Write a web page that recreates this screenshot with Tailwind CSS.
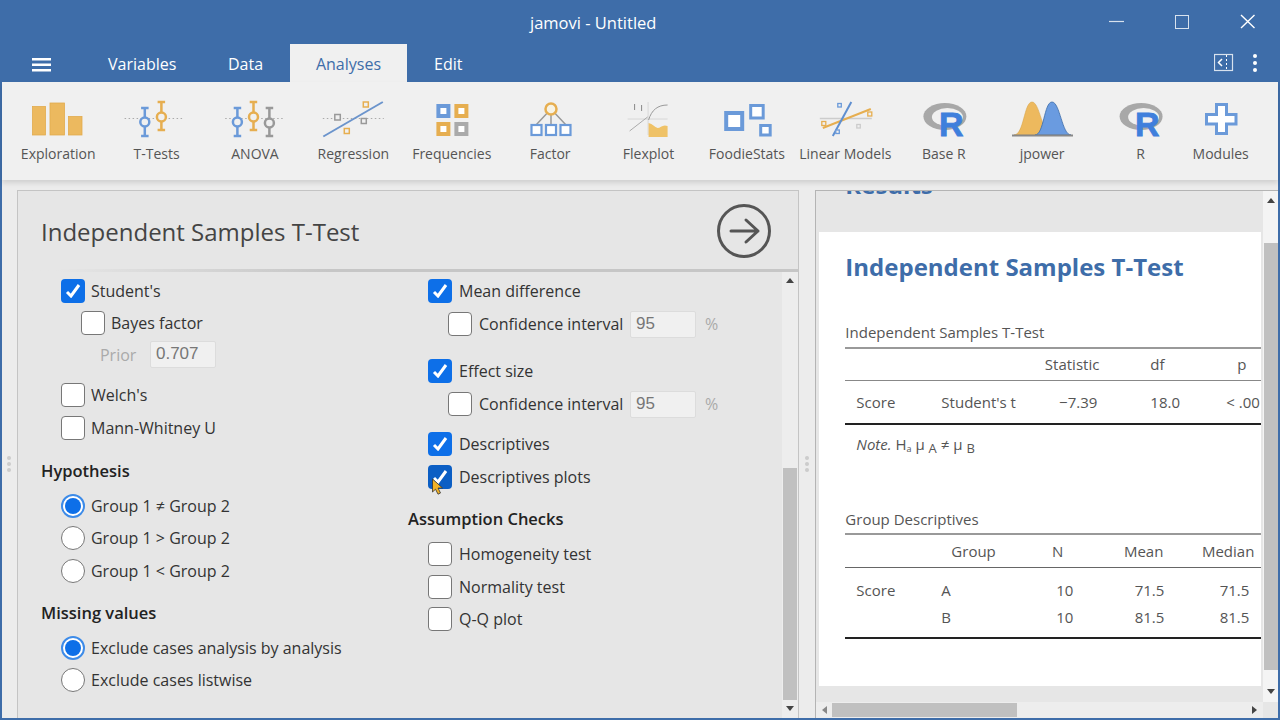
<!DOCTYPE html>
<html lang="en">
<head>
  <meta charset="UTF-8" />
  <title>jamovi - Untitled</title>
  <script src="https://cdn.jsdelivr.net/npm/@tailwindcss/browser@4"></script>
</head>
<body class="w-[1280px] h-[720px] overflow-hidden bg-[#3e6da9] font-['Open_Sans',sans-serif] text-[16px] text-[#333]">

  <!-- Title bar -->
  <header class="h-[44px] flex items-center text-white">
    <div class="ml-[530px] text-[16.500px] pt-[3px]">jamovi - Untitled</div>
    <svg class="ml-auto" width="180" height="44" viewBox="1100 0 180 44" fill="none" stroke="#fff">
      <path d="M1109 21.5h15" stroke-width="1.2" opacity="0.8"/>
      <rect x="1175.5" y="15.5" width="13" height="13" stroke-width="1" opacity="0.8"/>
      <path d="M1241 15l13.500 13M1254.500 15l-13.500 13" stroke-width="1.400"/>
    </svg>
  </header>

  <!-- Tabs -->
  <nav class="h-[38px] flex items-center text-white relative">
    <svg class="ml-[32px] mt-[4px]" width="20" height="14" viewBox="0 0 20 14" fill="#fff">
      <rect width="19" height="2.500" y="0"/><rect width="19" height="2.500" y="5.500"/><rect width="19" height="2.500" y="11"/>
    </svg>
    <div class="ml-[56px] w-[120px] pt-[2px]">Variables</div>
    <div class="w-[62px] pt-[2px]">Data</div>
    <div class="h-full w-[117px] pt-[2px] bg-[#f0f0f0] text-[#3e6da9] flex items-center justify-center">Analyses</div>
    <div class="ml-[27px] pt-[2px]">Edit</div>
    <svg class="ml-auto mr-[16px]" width="50" height="20" viewBox="1215 54 50 20" fill="none" stroke="#fff">
      <rect x="1215.500" y="55.500" width="18" height="16" stroke-width="1.200" opacity="0.8"/>
      <path d="M1223 60l-3.500 3.500 3.500 3.500" stroke-width="1.500"/>
      <path d="M1227.500 56v16" stroke-width="1" stroke-dasharray="2 2"/>
      <circle cx="1256" cy="57" r="2" fill="#fff" stroke="none"/>
      <circle cx="1256" cy="64" r="2" fill="#fff" stroke="none"/>
      <circle cx="1256" cy="71" r="2" fill="#fff" stroke="none"/>
    </svg>
  </nav>

  <!-- Analyses ribbon -->
  <section class="relative z-10 h-[98px] ml-[2px] mr-[2px] bg-[#f0f0f0] shadow-[0_3px_5px_rgba(0,0,0,0.12)] flex pl-[7px] text-[14px] text-[#555]">
    <div class="w-[98.400px] flex flex-col items-center">
      <svg width="98.400" height="58" viewBox="9 82 98.400 58" fill="#ecb95f" stroke="#e2ab4e" stroke-width="0.800">
        <rect x="32.500" y="106.500" width="13" height="28.500"/><rect x="50" y="103" width="14.500" height="32"/><rect x="68.500" y="116.500" width="13.500" height="18.500"/>
      </svg>
      <span class="leading-[20px] mt-[4px]">Exploration</span>
    </div>
    <div class="w-[98.400px] flex flex-col items-center">
      <svg width="98.400" height="58" viewBox="107.400 82 98.400 58" fill="none" stroke-width="2.500">
        <path d="M125 118.500h60" stroke="#aaa" stroke-width="1.200" stroke-dasharray="1.500 2.500"/>
        <path d="M141.500 108h7.500M145.200 108v28M141.500 136h7.500" stroke="#6b9ad9"/><circle cx="145.200" cy="122" r="4.500" fill="#f0f0f0" stroke="#6b9ad9"/>
        <path d="M158 102h7.500M161.800 102v28M158 130h7.500" stroke="#e6ae50"/><circle cx="161.800" cy="117" r="4.500" fill="#f0f0f0" stroke="#e6ae50"/>
      </svg>
      <span class="leading-[20px] mt-[4px]">T-Tests</span>
    </div>
    <div class="w-[98.400px] flex flex-col items-center">
      <svg width="98.400" height="58" viewBox="205.800 82 98.400 58" fill="none" stroke-width="2.500">
        <path d="M225 118.500h60" stroke="#aaa" stroke-width="1.200" stroke-dasharray="1.500 2.500"/>
        <path d="M233.500 108h7.500M237.200 108v28M233.500 136h7.500" stroke="#6b9ad9"/><circle cx="237.200" cy="122" r="4.500" fill="#f0f0f0" stroke="#6b9ad9"/>
        <path d="M249.500 102h7.500M253.300 102v28M249.500 130h7.500" stroke="#e6ae50"/><circle cx="253.300" cy="117" r="4.500" fill="#f0f0f0" stroke="#e6ae50"/>
        <path d="M265.500 108h7.500M269.200 108v28M265.500 136h7.500" stroke="#999"/><circle cx="269.200" cy="123" r="4.500" fill="#f0f0f0" stroke="#999"/>
      </svg>
      <span class="leading-[20px] mt-[4px]">ANOVA</span>
    </div>
    <div class="w-[98.400px] flex flex-col items-center">
      <svg width="98.400" height="58" viewBox="304.200 82 98.400 58" fill="#f0f0f0" stroke-width="1.500">
        <path d="M323 118.500h61" stroke="#aaa" stroke-width="1.200" stroke-dasharray="1.500 2.500"/>
        <path d="M323.500 136.500L383 102" stroke="#6b94cc" stroke-width="2"/>
        <rect x="335" y="114.500" width="5.500" height="5.500" stroke="#999"/><rect x="363.500" y="102" width="5" height="5" stroke="#e6ae50"/>
        <rect x="361.500" y="118.500" width="5" height="5" stroke="#999"/><rect x="344.500" y="128.500" width="5" height="5" stroke="#e6ae50"/>
      </svg>
      <span class="leading-[20px] mt-[4px]">Regression</span>
    </div>
    <div class="w-[98.400px] flex flex-col items-center">
      <svg width="98.400" height="58" viewBox="402.600 82 98.400 58" fill="#fff" stroke-width="4">
        <rect x="438" y="106" width="10" height="10" stroke="#6b9ad9"/><rect x="456" y="106" width="10" height="10" stroke="#e6ae50"/>
        <rect x="438" y="124" width="10" height="10" stroke="#e6ae50"/><rect x="456" y="124" width="10" height="10" stroke="#aaa"/>
      </svg>
      <span class="leading-[20px] mt-[4px]">Frequencies</span>
    </div>
    <div class="w-[98.400px] flex flex-col items-center">
      <svg width="98.400" height="58" viewBox="501 82 98.400 58" fill="#fff" stroke-width="2.200">
        <path d="M551 109L536 125M551 109v16M551 109l15 16" stroke="#999" stroke-width="1.500"/>
        <circle cx="551" cy="109" r="5.500" fill="#f7f3e4" stroke="#e6ae50" stroke-width="2.500"/>
        <rect x="531.500" y="125" width="10" height="10" stroke="#6b9ad9"/><rect x="546" y="125" width="10" height="10" stroke="#6b9ad9"/><rect x="560.500" y="125" width="10" height="10" stroke="#6b9ad9"/>
      </svg>
      <span class="leading-[20px] mt-[4px]">Factor</span>
    </div>
    <div class="w-[98.400px] flex flex-col items-center">
      <svg width="98.400" height="58" viewBox="599.400 82 98.400 58" fill="none">
        <path d="M628 119h40M648.500 102v33" stroke="#d8d8d8" stroke-width="1"/>
        <path d="M635 104v6M642 105v6" stroke="#888" stroke-width="1"/>
        <path d="M630 131L648 117" stroke="#aaa" stroke-width="1"/>
        <path d="M649 120C652 110 658 105 668 105" stroke="#999" stroke-width="1"/>
        <path d="M649 123C653 124 655 127 658 128C661 128 663 124 668 126V137H649Z" fill="#efc267"/>
      </svg>
      <span class="leading-[20px] mt-[4px]">Flexplot</span>
    </div>
    <div class="w-[98.400px] flex flex-col items-center">
      <svg width="98.400" height="58" viewBox="697.800 82 98.400 58" fill="#fff" stroke="#6b9ad9">
        <rect x="726" y="113" width="16" height="16" stroke-width="4"/><rect x="750.500" y="105.500" width="12.500" height="12.500" stroke-width="3"/><rect x="760.500" y="125.500" width="9.500" height="9.500" stroke-width="3"/>
      </svg>
      <span class="leading-[20px] mt-[4px]">FoodieStats</span>
    </div>
    <div class="w-[98.400px] flex flex-col items-center">
      <svg width="98.400" height="58" viewBox="796.200 82 98.400 58" fill="#f0f0f0" stroke-width="1.300">
        <path d="M820 118.500h52" stroke="#ccc"/>
        <path d="M823 128L871 109" stroke="#e6ae50" stroke-width="2"/>
        <path d="M833 136L851.500 102" stroke="#5f8fd0" stroke-width="2"/>
        <rect x="838" y="103.500" width="3.500" height="3.500" stroke="#6b9ad9"/><rect x="822" y="121.500" width="4" height="4" stroke="#e6ae50"/>
        <rect x="868" y="112" width="4" height="4" stroke="#e6ae50"/><rect x="836" y="130" width="3.500" height="3.500" stroke="#6b9ad9"/><rect x="857" y="124.500" width="3.500" height="3.500" stroke="#ccc"/>
      </svg>
      <span class="leading-[20px] mt-[4px]">Linear Models</span>
    </div>
    <div class="w-[98.400px] flex flex-col items-center">
      <svg width="98.400" height="58" viewBox="894.600 82 98.400 58">
        <ellipse cx="944.500" cy="116.500" rx="21.500" ry="13.500" fill="#a8a8a8"/>
        <ellipse cx="947" cy="117" rx="15.500" ry="9" fill="#f0f0f0"/>
        <text x="938.500" y="136" font-family="Liberation Sans" font-weight="700" font-size="34" fill="#3f7fdc" stroke="#3f7fdc" stroke-width="0.800">R</text>
      </svg>
      <span class="leading-[20px] mt-[4px]">Base R</span>
    </div>
    <div class="w-[98.400px] flex flex-col items-center">
      <svg width="98.400" height="58" viewBox="993 82 98.400 58">
        <path d="M1014 135C1024 135 1024 102 1032 102C1040 102 1042 135 1052 135Z" fill="#edb95e" stroke="#d9a64e" stroke-width="0.600"/>
        <path d="M1035 135C1044 135 1044 102 1052 102C1060 102 1062 135 1071 135Z" fill="#6a9be0" stroke="#3e6da9" stroke-width="0.800"/>
        <path d="M1012 135.500h61" stroke="#888" stroke-width="2"/>
      </svg>
      <span class="leading-[20px] mt-[4px]">jpower</span>
    </div>
    <div class="w-[98.400px] flex flex-col items-center">
      <svg width="98.400" height="58" viewBox="1091.400 82 98.400 58">
        <ellipse cx="1141.500" cy="116.500" rx="21.500" ry="13.500" fill="#a8a8a8"/>
        <ellipse cx="1144" cy="117" rx="15.500" ry="9" fill="#f0f0f0"/>
        <text x="1135.500" y="136" font-family="Liberation Sans" font-weight="700" font-size="34" fill="#3f7fdc" stroke="#3f7fdc" stroke-width="0.800">R</text>
      </svg>
      <span class="leading-[20px] mt-[4px]">R</span>
    </div>
    <div class="w-[62px] flex flex-col items-center">
      <svg width="62" height="58" viewBox="1190 82 62 58">
        <path d="M1216.500 104.500h10v10h9.500v9.500h-9.500v9.500h-10v-9.500h-10v-9.500h10z" fill="#fff" stroke="#6b9ad9" stroke-width="3"/>
      </svg>
      <span class="leading-[20px] mt-[4px]">Modules</span>
    </div>
  </section>

  <!-- Main area -->
  <main class="h-[538px] mx-[2px] bg-[#ececec] flex pt-[10px] text-[16px]">

    <!-- Options panel -->
    <div class="relative w-[15px]">
      <div class="absolute left-[5px] top-[266px] flex flex-col gap-[2px]">
        <span class="size-[4px] rounded-full bg-[#ccc]"></span><span class="size-[4px] rounded-full bg-[#ccc]"></span><span class="size-[4px] rounded-full bg-[#ccc]"></span>
      </div>
    </div>
    <section class="w-[783px] border border-b-0 border-[#c4c4c4] bg-[#e6e6e6] flex flex-col">
      <div class="h-[78px] shrink-0 flex items-center justify-between">
        <h2 class="ml-[23px] mt-[3px] text-[24px] font-normal text-[#444]">Independent Samples T-Test</h2>
        <svg class="mr-[26px] mt-[2px]" width="56" height="56" viewBox="0 0 56 56" fill="none" stroke="#555" stroke-width="3">
          <circle cx="28" cy="28" r="25.500"/>
          <path d="M15 28h27M30 17l12 11-12 11" stroke-linecap="round" stroke-linejoin="round"/>
        </svg>
      </div>
      <div class="h-[3px] shrink-0 bg-linear-to-r from-[#e6e6e6] from-[5%] to-[#c6c6c6] to-[40%]"></div>
      <div class="flex-1 flex min-h-0 relative">
        <div class="w-[390px] pl-[23px] pt-[3px]">
          <div class="h-8 flex items-center pl-[20px]">
            <span class="w-[24px] h-[24px] rounded-[4px] bg-[#0d6fe8] flex items-center justify-center mr-[6px]"><svg width="16" height="14" viewBox="0 0 16 14" fill="none" stroke="#fff" stroke-width="3"><path d="M2 8l4 4 8-11"/></svg></span>Student's
          </div>
          <div class="h-8 flex items-center pl-[40px]">
            <span class="w-[24px] h-[24px] rounded-[4px] bg-white border border-[#777] mr-[6px]"></span>Bayes factor
          </div>
          <div class="h-[31px] flex items-center pl-[59px] text-[#aaa]">
            <span class="w-[50px]">Prior</span>
            <span class="w-[66px] h-[27px] bg-[#f0f0f0] border border-[#dcdcdc] rounded-[2px] pl-[5px] leading-[24px] text-[17px] text-[#777] font-['Liberation_Sans']">0.707</span>
          </div>
          <div class="mt-[9px] h-8 flex items-center pl-[20px]">
            <span class="w-[24px] h-[24px] rounded-[4px] bg-white border border-[#777] mr-[6px]"></span>Welch's
          </div>
          <div class="mt-px h-8 flex items-center pl-[20px]">
            <span class="w-[24px] h-[24px] rounded-[4px] bg-white border border-[#777] mr-[6px]"></span>Mann-Whitney U
          </div>
          <div class="mt-[11px] h-8 flex items-center font-semibold text-[16.500px] text-[#222]">Hypothesis</div>
          <div class="mt-[3px] h-8 flex items-center pl-[20px]">
            <span class="w-[24px] h-[24px] rounded-full bg-white border-2 border-[#3d8be8] flex items-center justify-center mr-[6px]"><span class="w-[16px] h-[16px] rounded-full bg-[#0d6fe8]"></span></span>Group 1 ≠ Group 2
          </div>
          <div class="h-8 flex items-center pl-[20px]">
            <span class="w-[24px] h-[24px] rounded-full bg-white border border-[#777] mr-[6px]"></span>Group 1 &gt; Group 2
          </div>
          <div class="mt-px h-8 flex items-center pl-[20px]">
            <span class="w-[24px] h-[24px] rounded-full bg-white border border-[#777] mr-[6px]"></span>Group 1 &lt; Group 2
          </div>
          <div class="mt-[10px] h-8 flex items-center font-semibold text-[16.500px] text-[#222]">Missing values</div>
          <div class="mt-[3px] h-8 flex items-center pl-[20px]">
            <span class="w-[24px] h-[24px] rounded-full bg-white border-2 border-[#3d8be8] flex items-center justify-center mr-[6px]"><span class="w-[16px] h-[16px] rounded-full bg-[#0d6fe8]"></span></span>Exclude cases analysis by analysis
          </div>
          <div class="h-8 flex items-center pl-[20px]">
            <span class="w-[24px] h-[24px] rounded-full bg-white border border-[#777] mr-[6px]"></span>Exclude cases listwise
          </div>
        </div>
        <div class="flex-1 pt-[3px]">
          <div class="h-8 flex items-center pl-[20px]">
            <span class="w-[24px] h-[24px] rounded-[4px] bg-[#0d6fe8] flex items-center justify-center mr-[7px]"><svg width="16" height="14" viewBox="0 0 16 14" fill="none" stroke="#fff" stroke-width="3"><path d="M2 8l4 4 8-11"/></svg></span>Mean difference
          </div>
          <div class="mt-px h-8 flex items-center pl-[40px]">
            <span class="w-[24px] h-[24px] rounded-[4px] bg-white border border-[#777] mr-[7px]"></span><span class="w-[151px]">Confidence interval</span>
            <span class="w-[66px] h-[27px] bg-[#f0f0f0] border border-[#dcdcdc] rounded-[2px] pl-[5px] leading-[24px] text-[17px] text-[#777] font-['Liberation_Sans']">95</span>
            <span class="ml-[9px] text-[#aaa]">%</span>
          </div>
          <div class="mt-[15px] h-8 flex items-center pl-[20px]">
            <span class="w-[24px] h-[24px] rounded-[4px] bg-[#0d6fe8] flex items-center justify-center mr-[7px]"><svg width="16" height="14" viewBox="0 0 16 14" fill="none" stroke="#fff" stroke-width="3"><path d="M2 8l4 4 8-11"/></svg></span>Effect size
          </div>
          <div class="mt-px h-8 flex items-center pl-[40px]">
            <span class="w-[24px] h-[24px] rounded-[4px] bg-white border border-[#777] mr-[7px]"></span><span class="w-[151px]">Confidence interval</span>
            <span class="w-[66px] h-[27px] bg-[#f0f0f0] border border-[#dcdcdc] rounded-[2px] pl-[5px] leading-[24px] text-[17px] text-[#777] font-['Liberation_Sans']">95</span>
            <span class="ml-[9px] text-[#aaa]">%</span>
          </div>
          <div class="mt-[8px] h-8 flex items-center pl-[20px]">
            <span class="w-[24px] h-[24px] rounded-[4px] bg-[#0d6fe8] flex items-center justify-center mr-[7px]"><svg width="16" height="14" viewBox="0 0 16 14" fill="none" stroke="#fff" stroke-width="3"><path d="M2 8l4 4 8-11"/></svg></span>Descriptives
          </div>
          <div class="mt-px h-8 flex items-center pl-[20px] relative">
            <span class="w-[24px] h-[24px] rounded-[4px] bg-[#0b5ec4] flex items-center justify-center mr-[7px]"><svg width="16" height="14" viewBox="0 0 16 14" fill="none" stroke="#fff" stroke-width="3"><path d="M2 8l4 4 8-11"/></svg></span>Descriptives plots
            <svg class="absolute left-[23px] top-[17px]" width="13" height="18" viewBox="0 0 13 18"><path d="M1.500 1v13l3-2.800 2.500 5 2.500-1.200-2.500-5h4.500z" fill="#f2b327" stroke="#333" stroke-width="0.800"/></svg>
          </div>
          <div class="mt-[10px] h-8 flex items-center font-semibold text-[16.500px] text-[#222]">Assumption Checks</div>
          <div class="mt-[3px] h-8 flex items-center pl-[20px]">
            <span class="w-[24px] h-[24px] rounded-[4px] bg-white border border-[#777] mr-[7px]"></span>Homogeneity test
          </div>
          <div class="mt-px h-8 flex items-center pl-[20px]">
            <span class="w-[24px] h-[24px] rounded-[4px] bg-white border border-[#777] mr-[7px]"></span>Normality test
          </div>
          <div class="h-8 flex items-center pl-[20px]">
            <span class="w-[24px] h-[24px] rounded-[4px] bg-white border border-[#777] mr-[7px]"></span>Q-Q plot
          </div>
        </div>
        <!-- scrollbar -->
        <div class="w-[16px] shrink-0 bg-[#ededed] flex flex-col items-center">
          <svg class="mt-[6px]" width="8" height="5" viewBox="0 0 8 5" fill="#444"><path d="M0 5L4 0l4 5z"/></svg>
          <div class="mt-auto w-[14px] h-[232px] bg-[#c0c0c0]"></div>
          <svg class="mt-[6px] mb-[7px]" width="8" height="5" viewBox="0 0 8 5" fill="#444"><path d="M0 0L4 5l4-5z"/></svg>
        </div>
      </div>
    </section>

    <!-- Splitter -->
    <div class="relative w-[16px]">
      <div class="absolute left-[6px] top-[266px] flex flex-col gap-[2px]">
        <span class="size-[4px] rounded-full bg-[#ccc]"></span><span class="size-[4px] rounded-full bg-[#ccc]"></span><span class="size-[4px] rounded-full bg-[#ccc]"></span>
      </div>
    </div>

    <!-- Results panel -->
    <section class="w-[463px] border-l border-t border-[#b4b4b4] flex flex-col overflow-hidden bg-[#e6e6e6]">
      <div class="flex flex-1 min-h-0">
        <div class="w-[447px] flex flex-col overflow-hidden">
          <div class="h-[41px] shrink-0 pl-[29px] overflow-hidden">
            <div class="mt-[-22px] text-[24px] leading-[32px] font-bold text-[#3e6da9]">Results</div>
          </div>
          <div class="ml-[3px] w-[442px] h-[454px] bg-white pl-[26px] overflow-hidden text-[#555]">
            <h3 class="mt-[16px] h-[38px] leading-[38px] text-[24px] font-bold text-[#3e6da9] whitespace-nowrap">Independent Samples T-Test</h3>
            <div class="mt-[36px] mb-[4px] h-[21px] leading-[21px] text-[15px]">Independent Samples T-Test</div>
            <div class="w-[416px] border-t-2 border-[#999] h-[33px] grid grid-cols-[96px_70px_88px_51px_76px_35px] items-center text-[15px]">
              <span></span><span></span><span class="text-right">Statistic</span><span></span><span>df</span><span class="pl-[11px]">p</span>
            </div>
            <div class="w-[416px] border-t border-[#888] h-[45px] border-b-2 border-b-[#222] grid grid-cols-[96px_70px_88px_51px_76px_60px] items-center text-[15px] overflow-hidden">
              <span class="pl-[11px]">Score</span><span class="whitespace-nowrap">Student's t</span><span class="text-right pr-[2px]">−7.39</span><span></span><span>18.0</span><span class="whitespace-nowrap">&lt; .001</span>
            </div>
            <div class="mt-[7px] pl-[11px] text-[15px] leading-[24px]"><i>Note.</i> H<sub class="text-[9px]">a</sub> μ <sub class="text-[13px]">A</sub> ≠ μ <sub class="text-[13px]">B</sub></div>
            <div class="mt-[53px] h-[21px] leading-[21px] text-[15px]">Group Descriptives</div>
            <div class="w-[416px] mt-[3px] border-t-2 border-[#999] h-[34px] grid grid-cols-[96px_132px_91px_90px] items-center text-[15px]">
              <span></span><span class="pl-[10px] flex justify-between pr-[10px]"><span>Group</span><span>N</span></span><span class="text-right pr-px">Mean</span><span class="text-right">Median</span>
            </div>
            <div class="w-[416px] border-t border-[#666] border-b-2 border-b-[#222] pt-[9px] h-[72px] text-[15px]">
              <div class="h-[27px] grid grid-cols-[96px_132px_91px_85px] items-center">
                <span class="pl-[11px]">Score</span><span class="flex justify-between"><span>A</span><span>10</span></span><span class="text-right">71.5</span><span class="text-right">71.5</span>
              </div>
              <div class="h-[27px] grid grid-cols-[96px_132px_91px_85px] items-center">
                <span></span><span class="flex justify-between"><span>B</span><span>10</span></span><span class="text-right">81.5</span><span class="text-right">81.5</span>
              </div>
            </div>
          </div>
        </div>
        <!-- vertical scrollbar -->
        <div class="w-[15px] shrink-0 bg-[#f4f4f4] flex flex-col items-center">
          <svg class="mt-[7px]" width="8" height="5" viewBox="0 0 8 5" fill="#444"><path d="M0 5L4 0l4 5z"/></svg>
          <div class="mt-[40px] w-[14px] h-[427px] bg-[#c0c0c0]"></div>
          <svg class="mt-[19px]" width="8" height="5" viewBox="0 0 8 5" fill="#444"><path d="M0 0L4 5l4-5z"/></svg>
        </div>
      </div>
      <!-- horizontal scrollbar -->
      <div class="h-[16px] shrink-0 mr-[15px] bg-[#ededed] flex items-center">
        <svg class="ml-[6px]" width="5" height="8" viewBox="0 0 5 8" fill="#888"><path d="M5 0L0 4l5 4z"/></svg>
        <div class="ml-[5px] w-[185px] h-[14px] bg-[#c0c0c0]"></div>
        <svg class="ml-auto mr-[6px]" width="5" height="8" viewBox="0 0 5 8" fill="#444"><path d="M0 0L5 4 0 8z"/></svg>
      </div>
    </section>
  </main>
</body>
</html>
